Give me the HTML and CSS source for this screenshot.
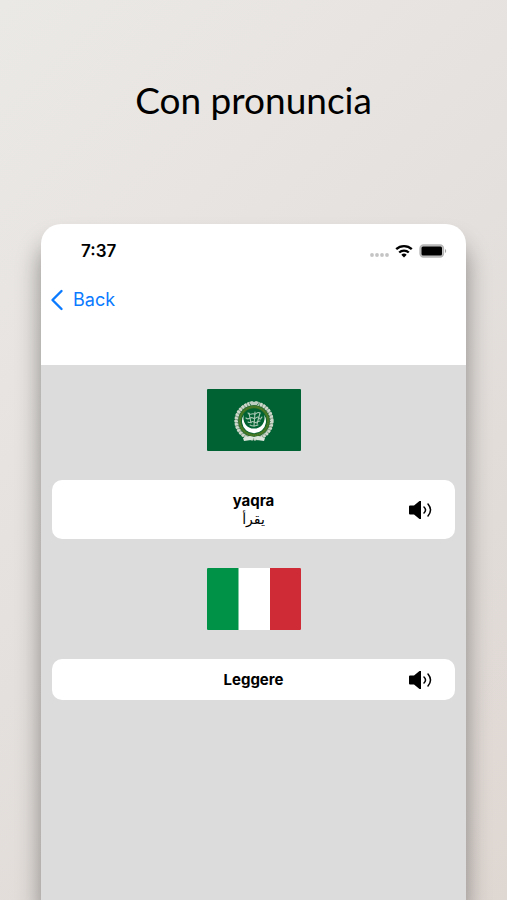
FILE: index.html
```html
<!DOCTYPE html>
<html lang="it">

<head>
    <meta charset="UTF-8">
    <meta name="viewport" content="width=device-width, initial-scale=1.0">
    <title>Con pronuncia</title>

    <link rel="stylesheet" href="styles.css">
</head>

<body>
    <h1>Con pronuncia</h1>

    <main class="phone">
        <header>
            <div class="status-bar">
                <span class="time">7:37</span>
                <div class="status-icons">
                    <svg width="20" height="12" viewBox="0 0 20 12" fill="#c4c4c4">
                        <circle cx="3" cy="10" r="1.900" />
                        <circle cx="8" cy="10" r="1.900" />
                        <circle cx="13" cy="10" r="1.900" />
                        <circle cx="18" cy="10" r="1.900" />
                    </svg>
                    <svg width="18" height="14" viewBox="0 0 18 14" fill="none" stroke="#000" stroke-width="2.300">
                        <path d="M1.200 5.200a11.200 11.200 0 0 1 15.600 0" />
                        <path d="M4.200 8.500a6.900 6.900 0 0 1 9.600 0" />
                        <path d="M6.300 10.700a4 4 0 0 1 5.400 0L9 13.500z" fill="#000" stroke="none" />
                    </svg>
                    <svg width="28" height="14" viewBox="0 0 28 14">
                        <rect x="1" y="1" width="23.500" height="12" rx="3.500" fill="#c4c4c4" stroke="#b5b5b5" stroke-width="1.300" />
                        <rect x="2.500" y="2.500" width="20.500" height="9" rx="1.500" fill="#000" />
                        <path d="M26 5v4c1.600-.6 1.600-3.400 0-4z" fill="#a5a5a5" />
                    </svg>
                </div>
            </div>
            <button type="button" class="back">
                <svg width="14" height="22" viewBox="0 0 14 22" fill="none" stroke="#0a7aff" stroke-width="2.400" stroke-linecap="round" stroke-linejoin="round">
                    <path d="M11.500 2L2.500 11l9 9" />
                </svg>
                Back
            </button>
        </header>

        <section class="words">
            <svg class="flag" viewBox="0 0 94 62" role="img" aria-label="العربية">
                <rect width="94" height="62" rx="1" fill="#006233" />
                <g fill="none">
                    <circle cx="47" cy="32" r="17.500" stroke="#8fa78f" stroke-width="3.500" />
                    <circle cx="47" cy="32" r="17.800" stroke="#cfd8cd" stroke-width="3.600" stroke-dasharray="2.200 1" />
                    <circle cx="47" cy="32" r="16.200" stroke="#38664a" stroke-width="1" stroke-dasharray="1 2" />
                    <circle cx="47" cy="32" r="14.200" stroke="#3f7424" stroke-width="2.800" />
                    <circle cx="47" cy="32" r="14.200" stroke="#5d8430" stroke-width="1" stroke-dasharray="1 1" />
                </g>
                <path d="M41 10h12l-2 6h-8z" fill="#006233" />
                <path d="M42 13l3-1 2 1 2-1 3 1-2 3h-6z" fill="#bdccc0" />
                <path d="M36 49l7-2 4 1 4-1 7 2-1 3-7-1-3-2-3 2-7 1z" fill="#dce5dc" />
                <path d="M37 25.500a12 12 0 1 0 20 0 10.600 10.600 0 1 1-20 0z" fill="#fff" />
                <g fill="none" stroke="#a9c9b5" stroke-width="1.100" stroke-linecap="round">
                    <path d="M41 24c2 3 4 0 6 1s3-3 6-1" />
                    <path d="M39 29c3 3 4-2 7 0s4-3 6 0 2-1 3-1" />
                    <path d="M41 33c3 2 4-2 6 0s4-1 6-1M43 36c3 2 5 1 8 0" />
                    <path d="M42 24l2 10M48 23l-1 14M53 24l-3 11" />
                </g>
            </svg>
            <article class="card">
                <p>yaqra<br><span lang="ar" dir="rtl">يقرأ</span></p>
                <button type="button" class="speak" aria-label="yaqra">
                    <svg width="24" height="18" viewBox="0 0.5 24 18">
                        <path d="M1 5h4L10.500.5h1.500v18h-1.500L5 14H1q-1 0-1-1V6q0-1 1-1z" />
                        <path d="M15 6.500q3 3 0 6M19 3.500q5 6 0 12" fill="none" stroke="#000" stroke-width="1.500" stroke-linecap="round" />
                    </svg>
                </button>
            </article>

            <svg class="flag" viewBox="0 0 94 62" role="img" aria-label="Italiano">
                <rect width="94" height="62" rx="1" fill="#fff" />
                <path d="M1 0h30.500v62H1q-1 0-1-1V1q0-1 1-1z" fill="#009246" />
                <path d="M63 0h30q1 0 1 1v60q0 1-1 1H63z" fill="#ce2b37" />
            </svg>
            <article class="card">
                <p>Leggere</p>
                <button type="button" class="speak" aria-label="Leggere">
                    <svg width="24" height="18" viewBox="0 0.5 24 18">
                        <path d="M1 5h4L10.500.5h1.500v18h-1.500L5 14H1q-1 0-1-1V6q0-1 1-1z" />
                        <path d="M15 6.500q3 3 0 6M19 3.500q5 6 0 12" fill="none" stroke="#000" stroke-width="1.500" stroke-linecap="round" />
                    </svg>
                </button>
            </article>
        </section>
    </main>
</body>

</html>
```
FILE: styles.css
```css
* {
    margin: 0;
    padding: 0;
    box-sizing: border-box;
}

body {
    min-height: 100vh;
    display: flex;
    flex-direction: column;
    padding: 76px 41px 0;
    background: linear-gradient(135deg, #ebe9e6, #e4e0dd 50%, #dfd7d2);
    font-family: Inter, "Liberation Sans", sans-serif;
    color: #000;
}

h1 {
    margin-bottom: 100px;
    font: 400 37px/48px Lato, sans-serif;
    text-align: center;
}

.phone {
    flex: 1;
    display: flex;
    flex-direction: column;
    border-radius: 20px 20px 0 0;
    background-color: #fff;
    box-shadow: 0 20px 24px rgba(0, 0, 0, 0.4);
}

header {
    height: 141px;
    padding: 15px 19px 0 9px;
}

.status-bar {
    display: flex;
    align-items: center;
    justify-content: space-between;
    margin-bottom: 25px;
    padding-left: 31px;
}

.time {
    font-size: 17px;
    line-height: 24px;
    font-weight: 600;
}

.status-icons {
    display: flex;
    align-items: center;
    gap: 6px;
}

button {
    border: none;
    background: none;
    cursor: pointer;
}

.back {
    display: flex;
    align-items: center;
    gap: 9px;
    color: #0a7aff;
    font: 400 18px/24px Inter, sans-serif;
}

.words {
    flex: 1;
    display: flex;
    flex-direction: column;
    align-items: center;
    padding: 24px 11px;
    background-color: #dcdcdc;
}

.flag {
    width: 94px;
    height: 62px;
}

.card {
    width: 100%;
    display: grid;
    grid-template-columns: 46px 1fr 46px;
    align-items: center;
    margin: 29px 0;
    padding: 12px 0 11px;
    border-radius: 10px;
    background-color: #fff;
}

.card p {
    grid-column: 2;
    font: 700 15px/18px Inter, "DejaVu Sans", sans-serif;
    text-align: center;
}

.card span {
    font-size: 14px;
    font-weight: 400;
}

.speak {
    height: 18px;
}

.speak svg {
    display: block;
}
```
